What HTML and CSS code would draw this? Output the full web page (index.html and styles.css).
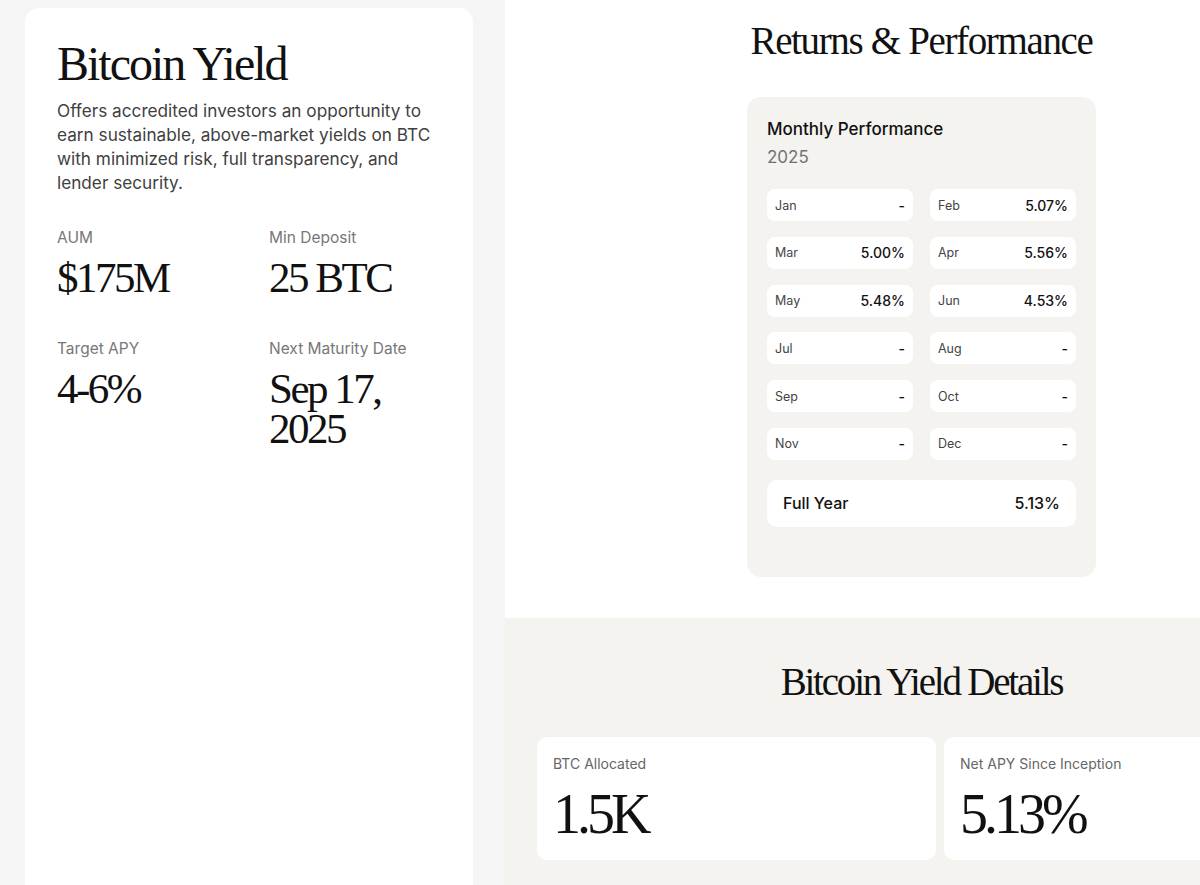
FILE: index.html
```html
<!DOCTYPE html>
<html lang="en">
<head>
<meta charset="utf-8">
<title>Bitcoin Yield</title>
<link rel="stylesheet" href="styles.css">
</head>
<body>
<div class="page">
  <aside class="side">
    <div class="side-card">
      <h1 class="fund-title">Bitcoin Yield</h1>
      <p class="fund-desc">Offers accredited investors an opportunity to earn sustainable, above-market yields on BTC with minimized risk, full transparency, and lender security.</p>
      <div class="stats">
        <div class="stat">
          <div class="stat-label">AUM</div>
          <div class="stat-value">$175M</div>
        </div>
        <div class="stat">
          <div class="stat-label">Min Deposit</div>
          <div class="stat-value">25 BTC</div>
        </div>
        <div class="stat">
          <div class="stat-label">Target APY</div>
          <div class="stat-value">4-6%</div>
        </div>
        <div class="stat">
          <div class="stat-label">Next Maturity Date</div>
          <div class="stat-value">Sep 17, 2025</div>
        </div>
      </div>
    </div>
  </aside>
  <main class="main">
    <section class="returns">
      <h2 class="section-title returns-title">Returns &amp; Performance</h2>
      <div class="perf-card">
        <div class="perf-title">Monthly Performance</div>
        <div class="perf-year">2025</div>
        <div class="months">
          <div class="month"><span class="m-name">Jan</span><span class="m-val">-</span></div>
          <div class="month"><span class="m-name">Feb</span><span class="m-val">5.07%</span></div>
          <div class="month"><span class="m-name">Mar</span><span class="m-val">5.00%</span></div>
          <div class="month"><span class="m-name">Apr</span><span class="m-val">5.56%</span></div>
          <div class="month"><span class="m-name">May</span><span class="m-val">5.48%</span></div>
          <div class="month"><span class="m-name">Jun</span><span class="m-val">4.53%</span></div>
          <div class="month"><span class="m-name">Jul</span><span class="m-val">-</span></div>
          <div class="month"><span class="m-name">Aug</span><span class="m-val">-</span></div>
          <div class="month"><span class="m-name">Sep</span><span class="m-val">-</span></div>
          <div class="month"><span class="m-name">Oct</span><span class="m-val">-</span></div>
          <div class="month"><span class="m-name">Nov</span><span class="m-val">-</span></div>
          <div class="month"><span class="m-name">Dec</span><span class="m-val">-</span></div>
        </div>
        <div class="full-year"><span>Full Year</span><span>5.13%</span></div>
      </div>
    </section>
    <section class="details">
      <h2 class="section-title details-title">Bitcoin Yield Details</h2>
      <div class="detail-cards">
        <div class="detail-card">
          <div class="detail-label">BTC Allocated</div>
          <div class="detail-value">1.5K</div>
        </div>
        <div class="detail-card">
          <div class="detail-label">Net APY Since Inception</div>
          <div class="detail-value">5.13%</div>
        </div>
      </div>
    </section>
  </main>
</div>
</body>
</html>
```

FILE: styles.css
```css
* { box-sizing: border-box; }

html, body {
  margin: 0;
  padding: 0;
  height: 885px;
  overflow: hidden;
}

body {
  background: #f5f5f5;
  font-family: Inter, "Liberation Sans", sans-serif;
  color: #111;
}

.page {
  display: flex;
  width: 100%;
  height: 885px;
  overflow: hidden;
}

.side {
  width: 505px;
  flex-shrink: 0;
  padding: 8px 32px 0 25px;
}

.side-card {
  background: #fff;
  border-radius: 14px 14px 0 0;
  height: 100%;
  padding: 30px 32px 0 32px;
}

.fund-title {
  margin: 0;
  font-family: "Liberation Serif", serif;
  font-weight: 400;
  font-size: 48px;
  line-height: 52px;
  letter-spacing: -2px;
  color: #111;
}

.fund-desc {
  margin: 9px 0 0;
  font-size: 17.2px;
  line-height: 24px;
  color: #3f3f3f;
}

.stats {
  margin-top: 33px;
  display: grid;
  grid-template-columns: 1fr 1fr;
  column-gap: 40px;
  row-gap: 41px;
}

.stat-label {
  font-size: 15.5px;
  line-height: 20px;
  color: #777;
}

.stat-value {
  margin-top: 10px;
  font-family: "Liberation Serif", serif;
  font-size: 43px;
  line-height: 40px;
  letter-spacing: -2.5px;
  color: #111;
}

.main {
  width: 833px;
  flex-shrink: 0;
  display: flex;
  flex-direction: column;
}

.returns {
  background: #fff;
  height: 618px;
  padding-top: 18px;
  display: flex;
  flex-direction: column;
  align-items: center;
}

.section-title {
  margin: 0;
  font-family: "Liberation Serif", serif;
  font-weight: 400;
  font-size: 39px;
  line-height: 46px;
  color: #111;
  text-align: center;
}

.returns-title { letter-spacing: -1.35px; }
.details-title { letter-spacing: -2.2px; }

.perf-card {
  margin-top: 33px;
  width: 349px;
  background: #f4f3ef;
  border-radius: 14px;
  padding: 21px 20px 50px;
}

.perf-title {
  font-size: 17px;
  line-height: 22px;
  font-weight: 500;
  color: #111;
}

.perf-year {
  margin-top: 6px;
  font-size: 17px;
  line-height: 22px;
  color: #727272;
}

.months {
  margin-top: 21px;
  display: grid;
  grid-template-columns: 146px 146px;
  column-gap: 17px;
  row-gap: 15.8px;
}

.month {
  height: 32px;
  background: #fff;
  border-radius: 8px;
  padding: 0 8px;
  display: flex;
  align-items: center;
  justify-content: space-between;
}

.m-name {
  font-size: 12.5px;
  color: #444;
}

.m-val {
  font-size: 14px;
  font-weight: 500;
  color: #111;
}

.full-year {
  margin-top: 20px;
  height: 47px;
  background: #fff;
  border-radius: 10px;
  padding: 0 16px;
  display: flex;
  align-items: center;
  justify-content: space-between;
  font-size: 16px;
  font-weight: 500;
  color: #111;
}

.details {
  flex: 1;
  background: #f4f3ef;
  padding: 41px 0 0 32px;
}

.details-title {
  padding-right: 32px;
}

.detail-cards {
  margin-top: 32px;
  display: grid;
  grid-template-columns: 399px 399px;
  column-gap: 8px;
}

.detail-card {
  background: #fff;
  border-radius: 10px;
  height: 123px;
  padding: 17px 16px 0;
}

.detail-label {
  font-size: 14px;
  line-height: 20px;
  color: #666;
}

.detail-value {
  margin-top: 12px;
  font-family: "Liberation Serif", serif;
  font-size: 56px;
  line-height: 56px;
  letter-spacing: -4px;
  color: #111;
}
```
